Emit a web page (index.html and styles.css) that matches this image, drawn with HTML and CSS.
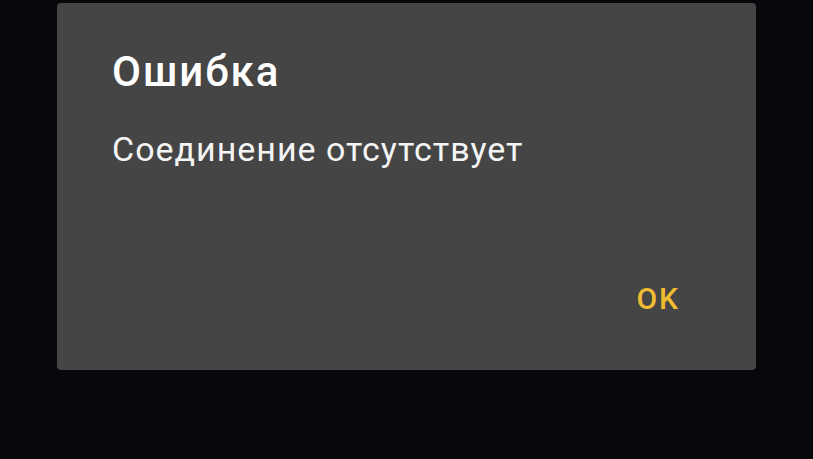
FILE: index.html
```html
<!DOCTYPE html>
<html lang="ru">
<head>
<meta charset="utf-8">
<link rel="stylesheet" href="styles.css">
</head>
<body>
<div class="dialog">
  <div class="title">Ошибка</div>
  <div class="message">Соединение отсутствует</div>
  <div class="actions"><span class="btn">OK</span></div>
</div>
</body>
</html>
```
FILE: styles.css
```css
html, body {
  margin: 0;
  padding: 0;
  background: #07080b;
  width: 813px;
  height: 459px;
  overflow: hidden;
  font-family: Roboto, "Noto Sans", sans-serif;
}
.dialog {
  box-sizing: border-box;
  margin: 3px 0 0 57px;
  width: 699px;
  height: 367px;
  background: #454545;
  border-radius: 4px;
  padding: 44px 76px 0 55px;
  display: flex;
  flex-direction: column;
}
.title {
  color: #ffffff;
  font-weight: 500;
  font-size: 42px;
  line-height: 50px;
  letter-spacing: 2px;
}
.message {
  color: #f4f4f4;
  font-size: 34px;
  line-height: 40px;
  letter-spacing: 1px;
  margin-top: 32px;
}
.actions {
  display: flex;
  justify-content: flex-end;
  margin-top: 112px;
}
.btn {
  color: #f0bd32;
  font-weight: 500;
  font-size: 30px;
  line-height: 36px;
  letter-spacing: 2px;
}
```
